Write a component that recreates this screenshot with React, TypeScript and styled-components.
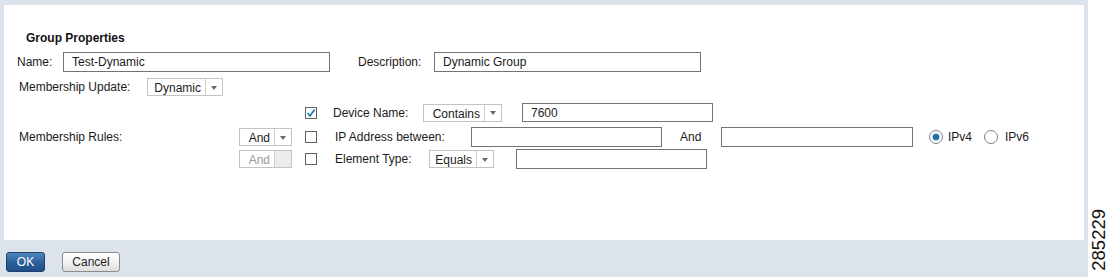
import React from "react";
import styled, { createGlobalStyle } from "styled-components";

const Global = createGlobalStyle`
  html, body { margin: 0; padding: 0; background: #ffffff; }
  body { font-family: "Liberation Sans", Arial, sans-serif; font-size: 12px; color: #1b1b1b; }
  * { box-sizing: border-box; }
`;

const Page = styled.div`
  display: flex;
  width: 1110px;
  height: 277px;
  overflow: hidden;
`;

const Frame = styled.div`
  width: 1088px;
  height: 277px;
  background: #dce3ea;
  padding: 5px 4px 0 4px;
  display: flex;
  flex-direction: column;
`;

const Panel = styled.div`
  background: #ffffff;
  height: 235px;
  padding: 26px 0 0 13px;
  display: flex;
  flex-direction: column;
`;

const Title = styled.div`
  font-weight: bold;
  font-size: 12px;
  margin-left: 9px;
  height: 15px;
  line-height: 15px;
  color: #111;
`;

const Row = styled.div<{ $mt?: number; $h?: number }>`
  display: flex;
  align-items: center;
  margin-top: ${(p) => p.$mt ?? 0}px;
  height: ${(p) => p.$h ?? 20}px;
`;

const Label = styled.span<{ $w?: number; $ml?: number }>`
  display: inline-block;
  width: ${(p) => (p.$w ? `${p.$w}px` : "auto")};
  margin-left: ${(p) => p.$ml ?? 0}px;
  white-space: nowrap;
  color: #1b1b1b;
`;

const TextInput = styled.div<{ $w: number; $h?: number; $ml?: number }>`
  width: ${(p) => p.$w}px;
  height: ${(p) => p.$h ?? 20}px;
  margin-left: ${(p) => p.$ml ?? 0}px;
  border: 1px solid #6e747a;
  background: #fff;
  padding-left: 8px;
  display: flex;
  align-items: center;
  color: #1b1b1b;
`;

const Select = styled.div<{ $w: number; $ml?: number; $disabled?: boolean }>`
  width: ${(p) => p.$w}px;
  height: 18px;
  margin-left: ${(p) => p.$ml ?? 0}px;
  border: 1px solid #c3c3c3;
  background: #fff;
  display: flex;
  align-items: stretch;
  color: ${(p) => (p.$disabled ? "#9a9a9a" : "#1b1b1b")};
`;

const SelectText = styled.span`
  flex: 1;
  display: flex;
  align-items: center;
  justify-content: flex-end;
  padding-right: 4px;
  padding-top: 2px;
`;

const SelectArrow = styled.span<{ $disabled?: boolean }>`
  width: 17px;
  border-left: 1px solid #cfcfcf;
  background: ${(p) => (p.$disabled ? "#ececec" : "#fff")};
  display: flex;
  align-items: center;
  justify-content: center;
`;

const Arrow = styled.span`
  width: 0;
  height: 0;
  border-left: 3.5px solid transparent;
  border-right: 3.5px solid transparent;
  border-top: 4px solid #666b70;
  margin-top: 1px;
`;

const Box = styled.span<{ $ml?: number }>`
  width: 12px;
  height: 12px;
  margin-left: ${(p) => p.$ml ?? 0}px;
  border: 1px solid #5c6166;
  background: #fff;
  display: inline-flex;
  align-items: center;
  justify-content: center;
  flex-shrink: 0;
`;

const Radio = styled.span<{ $ml?: number }>`
  width: 14px;
  height: 14px;
  border-radius: 50%;
  margin-left: ${(p) => p.$ml ?? 0}px;
  border: 1px solid #7a7f84;
  background: #fff;
  display: inline-flex;
  align-items: center;
  justify-content: center;
  flex-shrink: 0;
`;

const Dot = styled.span`
  width: 6px;
  height: 6px;
  border-radius: 50%;
  background: #1f6e9f;
  box-shadow: 0 0 0 1px #a9cde3;
`;

const RulesArea = styled.div`
  display: flex;
  align-items: center;
  margin-top: 7px;
`;

const RulesLabel = styled.span`
  width: 220px;
  margin-left: 2px;
  padding-top: 2px;
  white-space: nowrap;
`;

const RuleColumn = styled.div`
  display: flex;
  flex-direction: column;
`;

const LogicSlot = styled.div`
  width: 66px;
  display: flex;
`;

const Footer = styled.div`
  display: flex;
  align-items: center;
  padding: 12px 0 0 2px;
  gap: 17px;
`;

const Button = styled.button<{ $primary?: boolean; $w: number }>`
  width: ${(p) => p.$w}px;
  height: 20px;
  border-radius: 3px;
  font-family: "Liberation Sans", Arial, sans-serif;
  font-size: 12px;
  padding: 0;
  cursor: pointer;
  border: 1px solid ${(p) => (p.$primary ? "#1f3f69" : "#8c8c8c")};
  color: ${(p) => (p.$primary ? "#ffffff" : "#222")};
  background: ${(p) =>
    p.$primary
      ? "linear-gradient(#4f86bf, #2a5f9a 55%, #1f4f86)"
      : "linear-gradient(#ffffff, #f3f3f3 50%, #dcdcdc)"};
`;

const Side = styled.div`
  width: 22px;
  height: 277px;
  display: flex;
  flex-direction: column;
  justify-content: flex-end;
  align-items: flex-start;
  padding: 0 0 6px 2px;
`;

const FigNum = styled.span`
  writing-mode: vertical-rl;
  transform: rotate(180deg);
  font-family: "Liberation Sans", Arial, sans-serif;
  font-size: 18.5px;
  line-height: 18px;
  color: #111;
`;

const Check = () => (
  <svg width="10" height="10" viewBox="0 0 10 10">
    <path d="M1.5 5 L4 7.8 L8.6 1.6" fill="none" stroke="#2b7db5" strokeWidth="1.8" />
  </svg>
);

const Dropdown: React.FC<{ text: string; w: number; ml?: number; disabled?: boolean }> = ({
  text,
  w,
  ml,
  disabled,
}) => (
  <Select $w={w} $ml={ml} $disabled={disabled}>
    <SelectText>{text}</SelectText>
    <SelectArrow $disabled={disabled}>{!disabled && <Arrow />}</SelectArrow>
  </Select>
);

export default function App() {
  return (
    <>
      <Global />
      <Page>
        <Frame>
          <Panel>
            <Title>Group Properties</Title>
            <Row $mt={6}>
              <Label $w={46}>Name:</Label>
              <TextInput $w={267}>Test-Dynamic</TextInput>
              <Label $ml={28} $w={76}>Description:</Label>
              <TextInput $w={267}>Dynamic Group</TextInput>
            </Row>
            <Row $mt={6} $h={18}>
              <Label $ml={2} $w={128}>Membership Update:</Label>
              <Dropdown text="Dynamic" w={76} />
            </Row>
            <RulesArea>
              <RulesLabel>Membership Rules:</RulesLabel>
              <RuleColumn>
                <Row $h={19}>
                  <LogicSlot />
                  <Box>
                    <Check />
                  </Box>
                  <Label $ml={16} $w={90}>Device Name:</Label>
                  <Dropdown text="Contains" w={79} />
                  <TextInput $w={191} $h={19} $ml={20}>7600</TextInput>
                </Row>
                <Row $mt={5} $h={20}>
                  <LogicSlot>
                    <Dropdown text="And" w={53} />
                  </LogicSlot>
                  <Box />
                  <Label $ml={18} $w={136}>IP Address between:</Label>
                  <TextInput $w={191} />
                  <Label $ml={18} $w={41}>And</Label>
                  <TextInput $w={192} />
                  <Radio $ml={16}>
                    <Dot />
                  </Radio>
                  <Label $ml={5}>IPv4</Label>
                  <Radio $ml={12} />
                  <Label $ml={7}>IPv6</Label>
                </Row>
                <Row $mt={2} $h={20}>
                  <LogicSlot>
                    <Dropdown text="And" w={53} disabled />
                  </LogicSlot>
                  <Box />
                  <Label $ml={18} $w={94}>Element Type:</Label>
                  <Dropdown text="Equals" w={65} />
                  <TextInput $w={191} $ml={22} />
                </Row>
              </RuleColumn>
            </RulesArea>
          </Panel>
          <Footer>
            <Button $primary $w={39}>OK</Button>
            <Button $w={58}>Cancel</Button>
          </Footer>
        </Frame>
        <Side>
          <FigNum>285229</FigNum>
        </Side>
      </Page>
    </>
  );
}
